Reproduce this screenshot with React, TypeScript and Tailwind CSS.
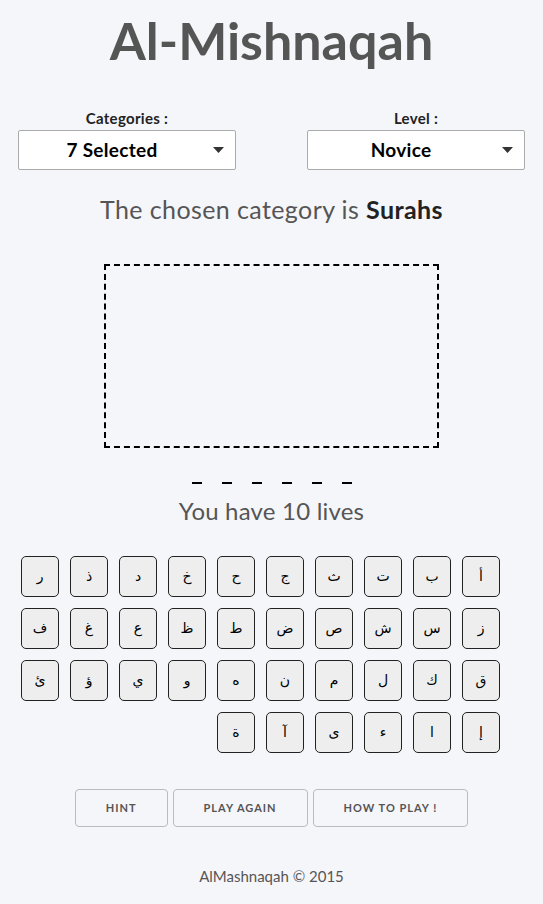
import React from "react";

const rows = [
  ["أ", "ب", "ت", "ث", "ج", "ح", "خ", "د", "ذ", "ر"],
  ["ز", "س", "ش", "ص", "ض", "ط", "ظ", "ع", "غ", "ف"],
  ["ق", "ك", "ل", "م", "ن", "ه", "و", "ي", "ؤ", "ئ"],
  ["إ", "ا", "ء", "ى", "آ", "ة"],
];

function Select({ label, value }: { label: string; value: string }) {
  return (
    <div className="w-[218px] flex flex-col items-center">
      <label className="text-[15px] leading-[20px] font-bold text-[#222] tracking-[0.3px]">{label}</label>
      <div className="relative mt-[2px] w-full h-[40px] bg-white border border-[#aaa] rounded-[2px] flex items-center justify-center pr-[30px]">
        <span className="text-[19px] font-bold text-black tracking-[0.3px]">{value}</span>
        <svg className="absolute right-[11px] top-[16px]" width="11" height="6" viewBox="0 0 11 6">
          <path d="M0 0 L11 0 L5.5 6 Z" fill="#333" />
        </svg>
      </div>
    </div>
  );
}

export default function App() {
  return (
    <div className="min-h-[904px] bg-[#f5f6fa] font-['Lato',sans-serif] text-[#222]">
      <h1 className="pt-[10px] text-center text-[52px] leading-[60px] font-bold text-[#555]">
        Al-Mishnaqah
      </h1>

      <div className="mt-[38px] flex justify-between px-[18px]">
        <Select label="Categories :" value="7 Selected" />
        <Select label="Level :" value="Novice" />
      </div>

      <p className="mt-[23px] text-center text-[25px] leading-[32px] text-[#555] tracking-[0.4px]">
        The chosen category is <b className="text-[#222]">Surahs</b>
      </p>

      <div className="mx-auto mt-[39px] w-[335px] h-[184px] border-2 border-dashed border-black" />

      <div className="mt-[34px] flex justify-center gap-[20px]">
        {Array.from({ length: 6 }).map((_, i) => (
          <span key={i} className="block w-[10px] h-[2px] bg-black" />
        ))}
      </div>

      <p className="mt-[11px] text-center text-[24px] leading-[32px] text-[#555] tracking-[0.2px]">You have 10 lives</p>

      <div dir="rtl" className="mt-[29px] w-[479px] ml-[21px] flex flex-col gap-[11px]">
        {rows.map((row, r) => (
          <div key={r} className="flex gap-[11px]">
            {row.map((ch) => (
              <button
                key={ch}
                className="w-[38px] h-[41px] bg-[#eee] border border-[#222] rounded-[5px] flex items-center justify-center font-['DejaVu_Sans',sans-serif] text-[14px] text-black"
              >
                {ch}
              </button>
            ))}
          </div>
        ))}
      </div>

      <div className="mt-[36px] flex justify-center gap-[5px]">
        {["Hint", "Play Again", "How to play !"].map((t) => (
          <button
            key={t}
            className="h-[38px] px-[30px] border border-[#bbb] rounded-[4px] text-[11px] font-bold uppercase tracking-[1px] text-[#555]"
          >
            {t}
          </button>
        ))}
      </div>

      <p className="mt-[37px] text-center text-[15px] leading-[24px] text-[#555]">AlMashnaqah © 2015</p>
    </div>
  );
}
